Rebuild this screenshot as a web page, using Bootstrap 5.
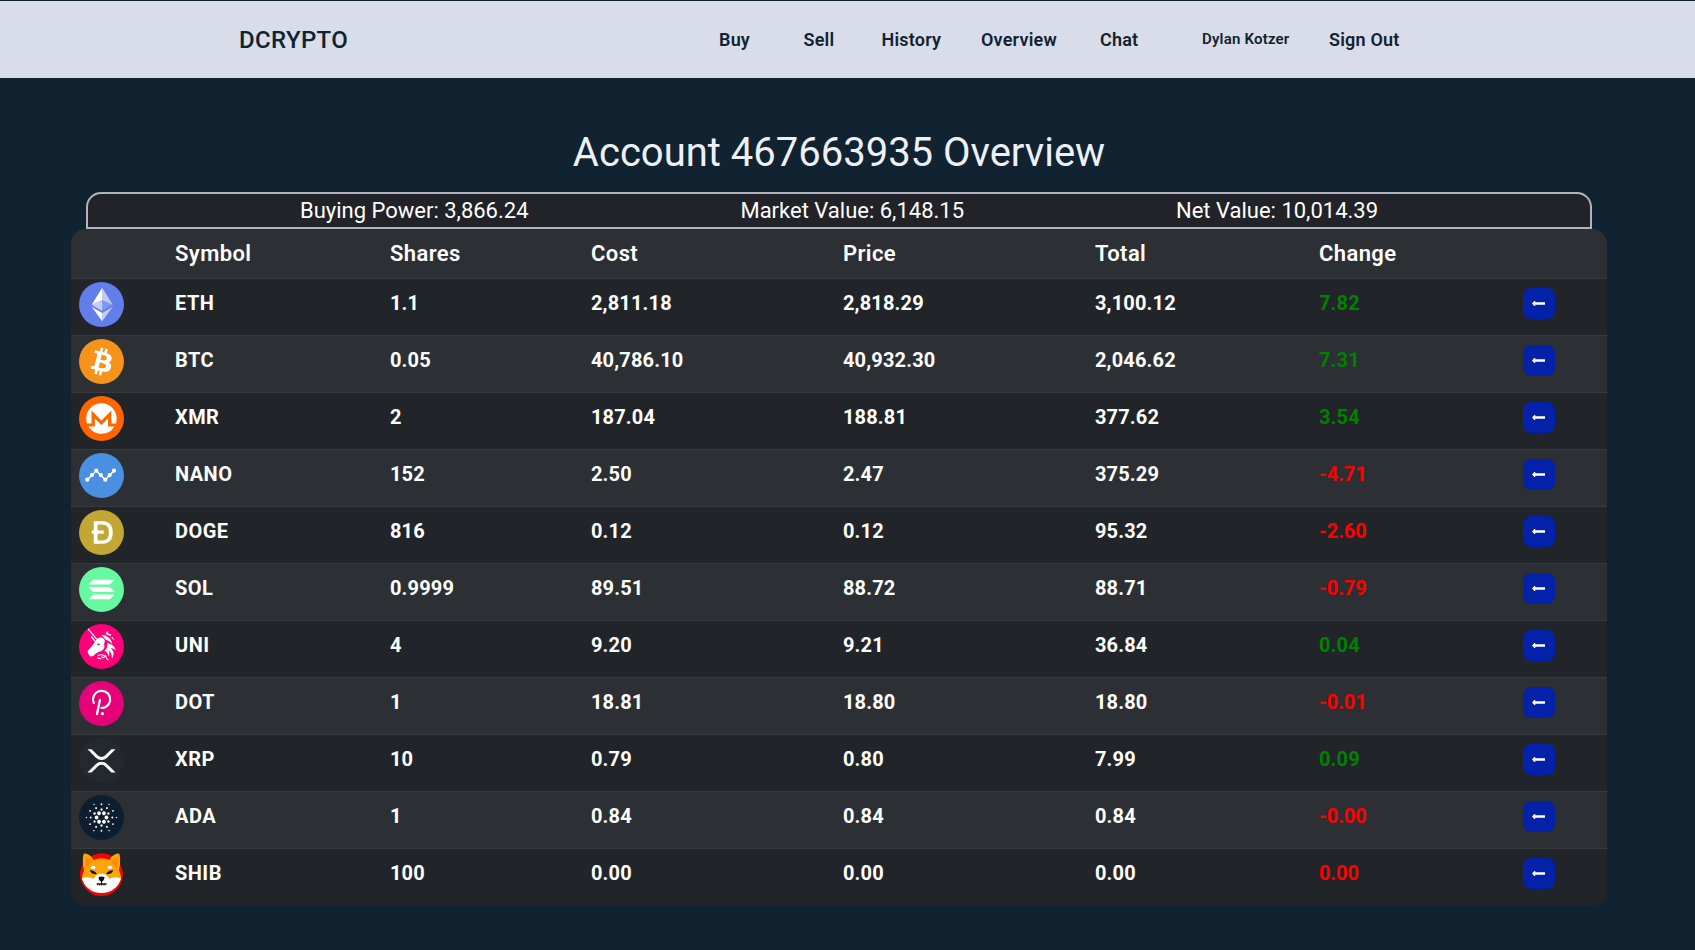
<!DOCTYPE html>
<html lang="en">
<head>
<meta charset="utf-8">
<meta name="viewport" content="width=device-width, initial-scale=1">
<title>DCRYPTO</title>
<link rel="stylesheet" href="https://cdn.jsdelivr.net/npm/bootstrap@5.3.0/dist/css/bootstrap.min.css">
<style>
body{background:#112330;font-family:Roboto,sans-serif;height:950px;overflow:hidden}
.topbar{background:#d8dde9;height:77px;margin-top:1px;padding-left:239px;color:#112330}
.topbar a{color:#112330;text-decoration:none;white-space:nowrap}
.brand{font-size:24px;font-weight:500;width:480px;line-height:79px;letter-spacing:.35px}
.menu{grid-template-columns:84.500px 78px 99.500px 119px 102px 127px auto;font-size:18px;font-weight:600;line-height:77px;letter-spacing:.2px}
.menu .user{font-size:15px;letter-spacing:.2px}
.page-title{color:#eef0f7;font-size:40px;font-weight:400;line-height:48px;margin:51px 17px 15px 0}
.summary{width:1506px;height:37px;margin-left:86px;background:#212328;border:2px solid #b1b4c0;border-radius:15px 15px 0 0;color:#fff;font-size:22px;line-height:34px}
.holdings{width:1536px;margin-left:71px;border-radius:15px;overflow:hidden}
.holdings table{table-layout:fixed;--bs-table-bg:#212529;border-color:#373b3e}
.holdings th,.holdings td{color:#fff!important;font-weight:700;white-space:nowrap}
.holdings thead th{height:49px;font-size:22px;line-height:32px;padding:8px;background:#2c3034;font-weight:600;letter-spacing:.4px}
.holdings tbody td{height:57px;padding:8px;font-size:20px;line-height:32px;letter-spacing:.15px;background:#212529;border-bottom:1px solid #373b3e;vertical-align:top}
.holdings tbody td:nth-child(2){letter-spacing:.45px}
.holdings tbody tr:nth-child(even) td{background:#2c3034}
.holdings tbody tr:last-child td{border-bottom:0;height:58px}
.holdings tbody td:first-child{padding:3px 8px 0}
.holdings tbody td.up{color:#008000!important}
.holdings tbody td.down{color:#f00!important;letter-spacing:-.1px}
.coin{width:45px;height:45px;display:block}
.back{width:32px;height:31px;background:#0421a9;border:0;border-radius:8px;padding:0;margin-top:1px;display:block}
.back svg{display:block;margin-left:9px}
</style>
</head>
<body>
<svg width="0" height="0" class="position-absolute"><defs>
<symbol id="back" viewBox="0 0 13 5"><path d="M0 2.5 2.3 0h1v1.200H13v2.600H3.300V5h-1z" fill="#fff"/></symbol>
</defs></svg>
<nav class="topbar d-flex"><a class="brand" href="#">DCRYPTO</a>
<div class="menu d-grid"><a href="#">Buy</a><a href="#">Sell</a><a href="#">History</a><a href="#">Overview</a><a href="#">Chat</a><a href="#" class="user">Dylan Kotzer</a><a href="#">Sign Out</a></div></nav>
<main>
<h1 class="page-title text-center">Account 467663935 Overview</h1>
<div class="summary d-flex justify-content-evenly"><span>Buying Power: 3,866.24</span><span>Market Value: 6,148.15</span><span>Net Value: 10,014.39</span></div>
<div class="holdings">
<table class="table table-dark mb-0">
<colgroup><col style="width:96px"><col style="width:215px"><col style="width:201px"><col style="width:252px"><col style="width:252px"><col style="width:224px"><col style="width:204px"><col></colgroup>
<thead><tr><th></th><th>Symbol</th><th>Shares</th><th>Cost</th><th>Price</th><th>Total</th><th>Change</th><th></th><th></th></tr></thead>
<tbody>
<tr><td><svg class="coin" viewBox="0 0 32 32"><circle cx="16" cy="16" r="16" fill="#627EEA"/><g fill="#fff"><path fill-opacity=".602" d="M16.498 4v8.87l7.497 3.35z"/><path d="M16.498 4L9 16.22l7.498-3.35z"/><path fill-opacity=".602" d="M16.498 21.968v6.027L24 17.616z"/><path d="M16.498 27.995v-6.028L9 17.616z"/><path fill-opacity=".2" d="M16.498 20.573l7.497-4.353-7.497-3.348z"/><path fill-opacity=".602" d="M9 16.22l7.498 4.353v-7.701z"/></g></svg></td><td>ETH</td><td>1.1</td><td>2,811.18</td><td>2,818.29</td><td>3,100.12</td><td class="up">7.82</td><td><button class="back"><svg width="13" height="5"><use href="#back"/></svg></button></td><td></td></tr>
<tr><td><svg class="coin" viewBox="0 0 32 32"><circle cx="16" cy="16" r="16" fill="#F7931A"/><path fill="#fff" fill-rule="evenodd" d="M23.189 14.02c.314-2.096-1.283-3.223-3.465-3.975l.708-2.84-1.728-.43-.69 2.765c-.454-.114-.92-.22-1.385-.326l.695-2.783L15.596 6l-.708 2.839c-.376-.086-.746-.17-1.104-.26l.002-.009-2.384-.595-.46 1.846s1.283.294 1.256.312c.7.175.826.638.805 1.006l-.806 3.235c.048.012.11.03.18.057l-.183-.045-1.13 4.532c-.086.212-.303.531-.793.41.018.025-1.256-.313-1.256-.313l-.858 1.978 2.25.561c.418.105.828.215 1.231.318l-.715 2.872 1.727.43.708-2.84c.472.127.93.245 1.378.357l-.706 2.828 1.728.43.715-2.866c2.948.558 5.164.333 6.097-2.333.752-2.146-.037-3.385-1.588-4.192 1.13-.26 1.98-1.003 2.207-2.538zm-3.95 5.538c-.533 2.147-4.148.986-5.32.695l.95-3.805c1.172.293 4.929.872 4.37 3.11zm.535-5.569c-.487 1.953-3.495.96-4.47.717l.86-3.45c.975.243 4.118.696 3.61 2.733z"/></svg></td><td>BTC</td><td>0.05</td><td>40,786.10</td><td>40,932.30</td><td>2,046.62</td><td class="up">7.31</td><td><button class="back"><svg width="13" height="5"><use href="#back"/></svg></button></td><td></td></tr>
<tr><td><svg class="coin" viewBox="0 0 32 32"><circle cx="16" cy="16" r="16" fill="#F60"/><path fill="#fff" d="M15.97 5.235c5.985 0 10.825 4.84 10.825 10.824a11.07 11.07 0 01-.558 3.432h-3.226v-9.094l-7.04 7.04-7.04-7.04v9.094H5.704a11.07 11.07 0 01-.557-3.432c0-5.984 4.84-10.824 10.824-10.824zM14.358 19.02L16 20.635l1.613-1.614 3.051-3.08v5.72h4.547a10.806 10.806 0 01-9.24 5.192c-3.902 0-7.334-2.082-9.24-5.192h4.546v-5.72l3.08 3.08z"/></svg></td><td>XMR</td><td>2</td><td>187.04</td><td>188.81</td><td>377.62</td><td class="up">3.54</td><td><button class="back"><svg width="13" height="5"><use href="#back"/></svg></button></td><td></td></tr>
<tr><td><svg class="coin" viewBox="0 0 32 32"><circle cx="16" cy="16" r="16" fill="#4A90E2"/><path d="M5.9 19 12.3 12.6 18.7 19 24.9 12.6" fill="none" stroke="#fff" stroke-width="1"/><path d="M5.9 19h0M9.2 15.7h0M12.3 12.6h0M15.5 15.7h0M18.7 19h0M21.8 15.7h0M24.9 12.6h0" stroke="#fff" stroke-width="3" stroke-linecap="round"/></svg></td><td>NANO</td><td>152</td><td>2.50</td><td>2.47</td><td>375.29</td><td class="down">-4.71</td><td><button class="back"><svg width="13" height="5"><use href="#back"/></svg></button></td><td></td></tr>
<tr><td><svg class="coin" viewBox="0 0 32 32"><circle cx="16" cy="16" r="16" fill="#C3A634"/><path fill="#fff" d="M13.248 14.61h4.314v2.286h-4.314v4.818h2.721c1.077 0 1.958-.145 2.644-.437.686-.291 1.224-.694 1.615-1.21a4.4 4.4 0 00.796-1.815 11.4 11.4 0 00.22-2.252 11.4 11.4 0 00-.22-2.252 4.396 4.396 0 00-.796-1.815c-.391-.516-.93-.919-1.615-1.21-.686-.292-1.567-.437-2.644-.437h-2.721v4.325zm-2.766 2.286H9v-2.285h1.482V8h6.549c1.21 0 2.257.21 3.142.627.885.419 1.607.99 2.168 1.715.56.724.977 1.572 1.25 2.543.273.971.409 2.01.409 3.115a11.47 11.47 0 01-.41 3.115c-.272.97-.689 1.819-1.25 2.543-.56.725-1.282 1.296-2.168 1.715-.884.418-1.931.627-3.142.627h-6.549v-7.104z"/></svg></td><td>DOGE</td><td>816</td><td>0.12</td><td>0.12</td><td>95.32</td><td class="down">-2.60</td><td><button class="back"><svg width="13" height="5"><use href="#back"/></svg></button></td><td></td></tr>
<tr><td><svg class="coin" viewBox="0 0 32 32"><circle cx="16" cy="16" r="16" fill="#66F9A1"/><path fill="#fff" d="M9.925 19.687a.59.59 0 01.415-.17h14.366a.29.29 0 01.207.497l-2.838 2.815a.59.59 0 01-.415.171H7.294a.291.291 0 01-.207-.498l2.838-2.815zm0-10.517A.59.59 0 0110.34 9h14.366c.261 0 .392.314.207.498l-2.838 2.815a.59.59 0 01-.415.17H7.294a.291.291 0 01-.207-.497L9.925 9.17zm12.15 5.225a.59.59 0 00-.415-.17H7.294a.291.291 0 00-.207.498l2.838 2.815c.11.109.26.17.415.17h14.366a.291.291 0 00.207-.498l-2.838-2.815z"/></svg></td><td>SOL</td><td>0.9999</td><td>89.51</td><td>88.72</td><td>88.71</td><td class="down">-0.79</td><td><button class="back"><svg width="13" height="5"><use href="#back"/></svg></button></td><td></td></tr>
<tr><td><svg class="coin" viewBox="0 0 32 32"><circle cx="16" cy="16" r="16" fill="#FF007A"/><path d="M6.500 3.500 12.500 10.800M8.700 8.900l2.600 3.200" fill="none" stroke="#fff" stroke-width=".9"/><g fill="#fff"><path d="M12 11.600c1.100-1.900 3-2.400 4.600-1.800.9.300 1.400 1.300 1.900 2.500l-.7 2c.6 1.600.4 3-.9 4.200-1.300 1.100-3.600 1.500-5.400 2.800-.6.500-1 1.500-2 1.500-.5.500-1.500.3-2.200-.6-.8-1-1.500-2-.9-3.300C7.800 17.500 9.900 15 12 11.600z"/><path d="M15.500 7.900c4.300.1 7.300 2.100 8.300 6.600-1.500-1.700-3.300-2.900-5.100-3.400-.6-1.300-1.600-2.400-3.200-3.200z"/><path d="M20 13.500c3.200.7 5.700 2.300 6 5.200-1.100-1-2.200-1.400-3.400-1.600 2.300 2.100 2.600 5 .8 7.500.1-2.700-.6-4.500-2.300-5.900.7 1.600.8 3-.1 4.200-.4-2.200-1.500-3.400-3-3.900 2-1.300 2.500-3.300 2-5.500z"/><path d="M20.100 4.800l.7 1.900 2 .8-.3 1.100-2.600-1.100-1.100-.3zM23.400 8.800l2 2.700-2.200-1.300z"/></g><path d="M12.600 14.500c.9-.8 1.900-.7 2.400 0-.6.700-1.600.8-2.400 0z" fill="#ff007a"/><path d="M13.300 22.500c2.800-1.200 5.200-.4 4.700.9-.4 1-2.100.6-1.600-.5M13 24.300c.9-.2 1.800.1 2.700.6M18.500 22.200c1.300 1.200.7 3.300 2.600 3.400" fill="none" stroke="#fff" stroke-width=".8"/></svg></td><td>UNI</td><td>4</td><td>9.20</td><td>9.21</td><td>36.84</td><td class="up">0.04</td><td><button class="back"><svg width="13" height="5"><use href="#back"/></svg></button></td><td></td></tr>
<tr><td><svg class="coin" viewBox="0 0 32 32"><circle cx="16" cy="16" r="16" fill="#E6007A"/><path d="M10.500 15.600A6.100 6.100 0 1 1 17 19.100H16M14.900 13.500 12.800 23.500" fill="none" stroke="#fff" stroke-width="1.600" stroke-linecap="round"/><circle cx="16.600" cy="23.200" r="1.150" fill="#fff"/></svg></td><td>DOT</td><td>1</td><td>18.81</td><td>18.80</td><td>18.80</td><td class="down">-0.01</td><td><button class="back"><svg width="13" height="5"><use href="#back"/></svg></button></td><td></td></tr>
<tr><td><svg class="coin" viewBox="0 0 32 32"><circle cx="16" cy="16" r="16" fill="#23292F"/><path fill="#fff" d="M23.07 8h2.89l-6.015 5.957a5.621 5.621 0 01-7.89 0L6.035 8H8.93l4.57 4.523a3.556 3.556 0 004.996 0L23.07 8zM8.895 24.563H6l6.055-5.993a5.621 5.621 0 017.89 0L26 24.562h-2.895L18.5 20a3.556 3.556 0 00-4.996 0l-4.61 4.563z"/></svg></td><td>XRP</td><td>10</td><td>0.79</td><td>0.80</td><td>7.99</td><td class="up">0.09</td><td><button class="back"><svg width="13" height="5"><use href="#back"/></svg></button></td><td></td></tr>
<tr><td><svg class="coin" viewBox="0 0 32 32"><circle cx="16" cy="16" r="16" fill="#0D1E30"/><defs><g id="arm"><path d="M19.500 16h0" stroke-width="2.700"/><path d="M23.700 16h0" stroke-width="1.400"/><path d="M26.700 16h0" stroke-width="1"/><path d="M20.940 18.850h0" stroke-width="1.700"/><path d="M24.140 20.700h0" stroke-width="1.300"/></g></defs><g stroke="#fff" stroke-linecap="round"><use href="#arm"/><use href="#arm" transform="rotate(60 16 16)"/><use href="#arm" transform="rotate(120 16 16)"/><use href="#arm" transform="rotate(180 16 16)"/><use href="#arm" transform="rotate(240 16 16)"/><use href="#arm" transform="rotate(300 16 16)"/></g></svg></td><td>ADA</td><td>1</td><td>0.84</td><td>0.84</td><td>0.84</td><td class="down">-0.00</td><td><button class="back"><svg width="13" height="5"><use href="#back"/></svg></button></td><td></td></tr>
<tr><td><svg class="coin" viewBox="0 .4 32 32"><circle cx="16" cy="16.500" r="15.200" fill="#f00500"/><path d="M3.300 1.900C4.500.800 8 2.300 10.500 6c3.500-1.400 7.500-1.400 11 0 2.500-3.700 6-5.200 7.200-4.100.9 2.900.7 8-.3 11.600 1 2 1.700 4.500 1.500 6.500-3 4-8 6-13.900 6S5.100 24 2.100 20c-.2-2 .5-4.500 1.500-6.500-1-3.600-1.200-8.700-.3-11.600z" fill="#ffa409"/><path d="M4.900 4.300C6.600 4.500 8 6 9 7.900 7.100 9.300 5.900 10.800 5.200 12.500 4.600 9.500 4.400 6.500 4.900 4.300zM27.100 4.300C25.400 4.500 24 6 23 7.900c1.900 1.400 3.100 2.900 3.800 4.600.6-3 .8-6 .3-8.200z" fill="#ff8a00"/><path d="M2.200 19.200c3.200-1.500 6.300-1 8 .4 1.300-2.500 3.300-3.700 5.800-3.700s4.500 1.200 5.800 3.700c1.700-1.400 4.800-1.900 8-.4C28.500 25 23 29.600 16 29.600S3.500 25 2.200 19.200z" fill="#fff"/><ellipse cx="10.100" cy="11.300" rx="1.700" ry="1.100" fill="#fff"/><ellipse cx="21.900" cy="11.300" rx="1.700" ry="1.100" fill="#fff"/><path d="M7.600 13.400c2.200-.1 4 .7 5.200 2.700-2.300.3-4.400-.2-5.200-2.700zM24.400 13.400c-2.200-.1-4 .7-5.200 2.700 2.300.3 4.400-.2 5.200-2.700zM14 18.200c1.200-.6 2.800-.6 4 0 .3 1.300-.4 2.600-1.600 3.100v1.300h3.400l-.5 1.700-.7-1-.8 1.200-.7-1.200-.9 1.200-.9-1.200-.8 1.200-.7-1.200-.8 1-.6-1.700h3.200v-1.300C14.400 20.800 13.700 19.500 14 18.200z" fill="#15120f"/></svg></td><td>SHIB</td><td>100</td><td>0.00</td><td>0.00</td><td>0.00</td><td class="down">0.00</td><td><button class="back"><svg width="13" height="5"><use href="#back"/></svg></button></td><td></td></tr>
</tbody></table></div></main>
<script src="https://cdn.jsdelivr.net/npm/bootstrap@5.3.0/dist/js/bootstrap.bundle.min.js"></script>
</body>
</html>
